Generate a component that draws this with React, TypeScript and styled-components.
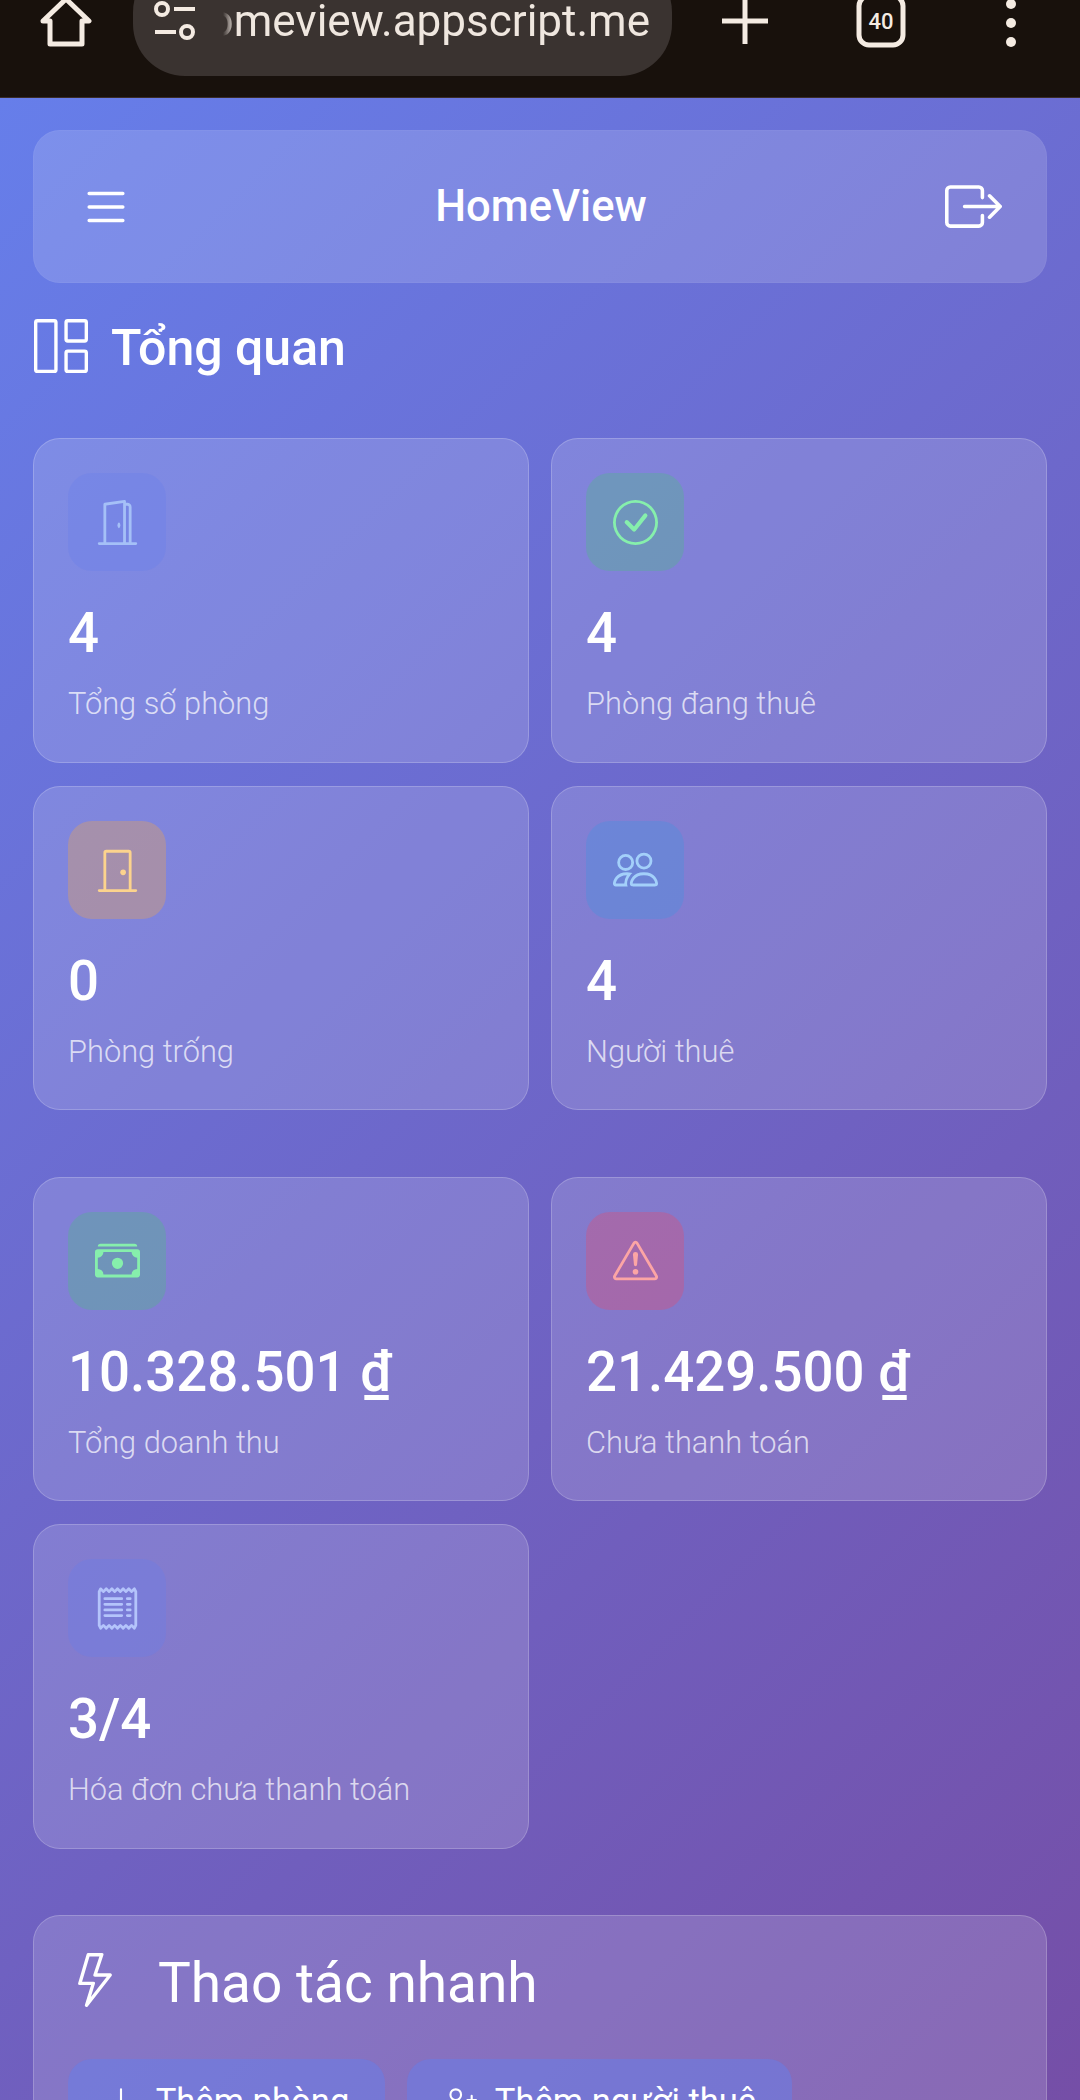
import React from 'react';
import styled, { createGlobalStyle } from 'styled-components';
import {
  BsBoxArrowRight, BsCashStack, BsCheckCircle, BsDoorClosed, BsDoorOpen, BsExclamationTriangle,
  BsGrid1X2, BsLightning, BsList, BsPeople, BsPersonPlus, BsPlusLg, BsReceipt,
} from 'react-icons/bs';

const Global = createGlobalStyle`
  html, body { margin: 0; padding: 0; background: #18110c; }
  body { font-family: Roboto, "Noto Sans", sans-serif; }
  * { box-sizing: border-box; }
`;

const Screen = styled.div`
  width: 1080px; height: 2100px; overflow: hidden; display: flex; flex-direction: column;
`;
const BrowserBar = styled.div`
  height: 98px; flex: none; background: #18110c; overflow: hidden; position: relative;
  display: flex; align-items: flex-start; color: #f4ebe2;
  border-bottom: 1px solid #3a2c28;
`;
const ChromeIcon = styled.svg<{ $left: number; $w: number }>`
  flex: none; margin-left: ${p => p.$left}px; width: ${p => p.$w}px; height: 50px;
`;
const UrlPill = styled.div`
  flex: none; margin-left: 41px; margin-top: -40px; width: 539px; height: 116px;
  background: #3a3330; border-radius: 52px; display: flex; align-items: flex-start;
  padding: 40px 0 0 20px;
`;
const UrlText = styled.div`
  width: 433px; margin-left: 20px; margin-top: -2px; height: 56px;
  overflow: hidden; display: flex; justify-content: flex-end;
  font-size: 44px; line-height: 46px; color: #efe7df; white-space: nowrap;
  -webkit-mask-image: linear-gradient(90deg, transparent 6px, #000 18px);
  mask-image: linear-gradient(90deg, transparent 6px, #000 18px);
`;
const Page = styled.div`
  flex: 1; padding: 32px 33px 0;
  background: linear-gradient(135deg, #667eea 0%, #764ba2 100%);
`;
const GlassCard = styled.div`
  background: rgba(255, 255, 255, 0.15);
  border: 1.5px solid rgba(255, 255, 255, 0.2);
  border-radius: 27px;
`;
const Header = styled(GlassCard)`
  height: 153px; display: flex; align-items: center; justify-content: space-between;
  padding: 0 44px 0 50px; color: #fff; border-color: rgba(255,255,255,.04);
`;
const HeaderTitle = styled.h1`
  margin: 0 0 0 4px; font-size: 43.5px; font-weight: 500; color: #fff;
`;
const MenuIcon = styled(BsList)` width: 54px; height: 54px; margin-left: -5px; `;
const LogoutIcon = styled(BsBoxArrowRight)` width: 57px; height: 57px; `;
const SectionTitle = styled.h2`
  margin: 36px 0 65px; height: 54px; display: flex; align-items: center; gap: 22px;
  font-size: 50px; font-weight: 500; color: #fff;
  svg { width: 56px; height: 54px; flex: none; }
`;
const TitleText = styled.span<{ $drop: number }>`
  padding-top: ${p => p.$drop}px;
`;
const StatGrid = styled.div`
  display: grid; grid-template-columns: 496px 496px; gap: 23px 22px; margin-bottom: 66.5px;
`;
const StatCard = styled(GlassCard)`
  height: 324.5px; padding: 34px 34px 0;
`;
const IconBox = styled.div<{ $bg: string; $fg: string }>`
  width: 98px; height: 98px; border-radius: 24px; background: ${p => p.$bg}; color: ${p => p.$fg};
  display: flex; align-items: center; justify-content: center; font-size: 45px;
`;
const StatValue = styled.div`
  margin-top: 30px; font-size: 54.6px; line-height: 64px; font-weight: 500; color: #fff;
`;
const StatLabel = styled.div`
  margin-top: 19px; font-size: 30.8px; line-height: 40px; font-weight: 300; color: rgba(255,255,255,.72);
`;
const QuickCard = styled(GlassCard)`
  padding: 34px 34px 0; height: 400px;
`;
const QuickTitle = styled.h3`
  margin: 0; display: flex; align-items: center; gap: 36px; height: 60px;
  font-size: 55px; font-weight: 400; color: #fff;
  svg { font-size: 54px; flex: none; }
`;
const QuickRow = styled.div` display: flex; gap: 22px; margin-top: 49px; `;
const QuickButton = styled.button<{ $w: number }>`
  width: ${p => p.$w}px; height: 84px; border: 0; border-radius: 24px;
  background: rgba(102, 126, 234, 0.5); color: #fff; font: 400 34.6px Roboto, sans-serif;
  display: flex; align-items: center; justify-content: center; gap: 18px;
  svg { font-size: 34px; }
`;

const stats = [
  [
    { icon: <BsDoorOpen />, bg: 'rgba(102,126,234,.3)', fg: '#a5c0f7', value: '4', label: 'Tổng số phòng' },
    { icon: <BsCheckCircle />, bg: 'rgba(74,190,128,.32)', fg: '#86efac', value: '4', label: 'Phòng đang thuê' },
    { icon: <BsDoorClosed />, bg: 'rgba(251,170,60,.3)', fg: '#fcd38d', value: '0', label: 'Phòng trống' },
    { icon: <BsPeople />, bg: 'rgba(59,150,226,.3)', fg: '#a3d0fa', value: '4', label: 'Người thuê' },
  ],
  [
    { icon: <BsCashStack />, bg: 'rgba(74,190,128,.32)', fg: '#86efac', value: '10.328.501 ₫', label: 'Tổng doanh thu' },
    { icon: <BsExclamationTriangle />, bg: 'rgba(239,68,100,.3)', fg: '#fca5a5', value: '21.429.500 ₫', label: 'Chưa thanh toán' },
    { icon: <BsReceipt />, bg: 'rgba(102,126,234,.3)', fg: '#b4c4fb', value: '3/4', label: 'Hóa đơn chưa thanh toán' },
  ],
];

export default function App() {
  return (
    <Screen>
      <Global />
      <BrowserBar>
        <ChromeIcon $left={40} $w={52} viewBox="0 0 52 50" fill="none" stroke="currentColor" strokeWidth="5" strokeLinejoin="round">
          <path d="M3 21 26 -1l23 22h-7v23H10V21Z" />
        </ChromeIcon>
        <UrlPill>
          <ChromeIcon $left={0} $w={44} viewBox="0 0 44 50" fill="none" stroke="currentColor" strokeWidth="4">
            <circle cx="9" cy="9" r="6" /><path d="M21 9h21M2 32h21" /><circle cx="34" cy="32" r="6" />
          </ChromeIcon>
          <UrlText>homeview.appscript.me</UrlText>
        </UrlPill>
        <ChromeIcon $left={50} $w={46} viewBox="0 0 46 50" fill="none" stroke="currentColor" strokeWidth="5">
          <path d="M23 0v44M0 21h46" />
        </ChromeIcon>
        <ChromeIcon $left={88} $w={50} viewBox="0 0 50 50" fill="none" stroke="currentColor" strokeWidth="5">
          <rect x="3" y="-4" width="44" height="49" rx="10" />
          <text x="25" y="29" textAnchor="middle" fontSize="22" fontFamily="Roboto" fontWeight="500" fill="currentColor" stroke="none">40</text>
        </ChromeIcon>
        <ChromeIcon $left={92} $w={26} viewBox="0 0 26 50" fill="currentColor">
          <circle cx="13" cy="4" r="5" /><circle cx="13" cy="23" r="5" /><circle cx="13" cy="42" r="5" />
        </ChromeIcon>
      </BrowserBar>
      <Page>
        <Header>
          <MenuIcon />
          <HeaderTitle>HomeView</HeaderTitle>
          <LogoutIcon />
        </Header>
        <SectionTitle><BsGrid1X2 /><TitleText $drop={4}>Tổng quan</TitleText></SectionTitle>
        {stats.map((group, i) => (
          <StatGrid key={i}>
            {group.map(s => (
              <StatCard key={s.label}>
                <IconBox $bg={s.bg} $fg={s.fg}>{s.icon}</IconBox>
                <StatValue>{s.value}</StatValue>
                <StatLabel>{s.label}</StatLabel>
              </StatCard>
            ))}
          </StatGrid>
        ))}
        <QuickCard>
          <QuickTitle><BsLightning /><TitleText $drop={5}>Thao tác nhanh</TitleText></QuickTitle>
          <QuickRow>
            <QuickButton $w={317}><BsPlusLg />Thêm phòng</QuickButton>
            <QuickButton $w={385}><BsPersonPlus />Thêm người thuê</QuickButton>
          </QuickRow>
        </QuickCard>
      </Page>
    </Screen>
  );
}
